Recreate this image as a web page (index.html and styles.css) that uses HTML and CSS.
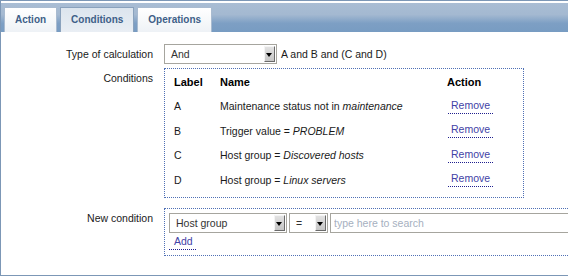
FILE: index.html
```html
<!DOCTYPE html>
<html lang="en">
<head>
  <meta charset="utf-8">
  <title>Action conditions</title>
  <link rel="stylesheet" href="styles.css">
</head>
<body>
  <div class="page">
    <!-- Tabs -->
    <div class="tabs">
      <a class="tab" href="#">Action</a>
      <a class="tab selected" href="#">Conditions</a>
      <a class="tab" href="#">Operations</a>
    </div>

    <!-- Form -->
    <div class="form">
      <div class="form-row">
        <div class="form-label">Type of calculation</div>
        <div class="form-field inline">
          <div class="select calc"><span>And</span><i class="arrow"></i></div>
          <span class="formula">A and B and (C and D)</span>
        </div>
      </div>

      <div class="form-row conditions-row">
        <div class="form-label">Conditions</div>
        <div class="form-field">
          <div class="box cond-box">
            <table class="cond-table">
              <tr class="head">
                <th class="col-label">Label</th>
                <th class="col-name">Name</th>
                <th>Action</th>
              </tr>
              <tr>
                <td>A</td>
                <td>Maintenance status not in <em>maintenance</em></td>
                <td><a class="link remove" href="#">Remove</a></td>
              </tr>
              <tr>
                <td>B</td>
                <td>Trigger value = <em>PROBLEM</em></td>
                <td><a class="link remove" href="#">Remove</a></td>
              </tr>
              <tr>
                <td>C</td>
                <td>Host group = <em>Discovered hosts</em></td>
                <td><a class="link remove" href="#">Remove</a></td>
              </tr>
              <tr>
                <td>D</td>
                <td>Host group = <em>Linux servers</em></td>
                <td><a class="link remove" href="#">Remove</a></td>
              </tr>
            </table>
          </div>
        </div>
      </div>

      <div class="form-row new-row">
        <div class="form-label">New condition</div>
        <div class="form-field">
          <div class="box new-box">
            <div class="new-controls">
              <div class="select host"><span>Host group</span><i class="arrow"></i></div>
              <div class="select operator"><span>=</span><i class="arrow"></i></div>
              <input class="search" type="text" placeholder="type here to search">
            </div>
            <a class="link add" href="#">Add</a>
          </div>
        </div>
      </div>
    </div>
  </div>
</body>
</html>
```
FILE: styles.css
```css
/* Reset */
* {
  box-sizing: border-box;
}

html, body {
  margin: 0;
  overflow: hidden;
}

body {
  background: #fff;
  font-family: "Liberation Sans", Arial, sans-serif;
  font-size: 10.5px;
  color: #1a1a1a;
}

.page {
  width: 100%;
  overflow: hidden;
  border: 1px solid #7c97b6;
  border-right: none;
}

/* Tab bar */
.tabs {
  display: flex;
  align-items: flex-end;
  height: 29px;
  margin-top: 2px;
  padding: 4px 0 0 3px;
  background: linear-gradient(#a9bdd4 0%, #a4b9d1 40%, #7d9fc4 70%, #789cc2 100%);
}

.tab {
  height: 25px;
  line-height: 24px;
  margin-right: 3px;
  padding: 0 10px;
  border: 1px solid #a9bbd0;
  border-bottom: none;
  background: linear-gradient(#ffffff, #eef2f6);
  color: #3e5f88;
  font-size: 10px;
  font-weight: bold;
  text-decoration: none;
}

.tab.selected {
  border-color: #8aa2bd;
  background: linear-gradient(#dce5ee, #e9eef4);
}

/* Form layout */
.form {
  padding: 12px 0 19px 0;
}

.form-row {
  display: flex;
  gap: 11px;
}

.conditions-row {
  margin-top: 4px;
}

.new-row {
  margin-top: 10px;
}

.form-label {
  width: 152px;
  flex-shrink: 0;
  text-align: right;
  padding-top: 4px;
  line-height: 13px;
}

.form-field.inline {
  display: flex;
  align-items: center;
  gap: 4px;
}

/* Select boxes */
.select {
  display: flex;
  height: 20px;
  padding: 1px;
  border: 1px solid #a6a59e;
  background: #fff;
  color: #333;
}

.select span {
  flex: 1;
  padding-left: 5px;
  line-height: 16px;
}

.select .arrow {
  position: relative;
  width: 11px;
  border-top: 1px solid #f4f4f4;
  border-left: 1px solid #f4f4f4;
  border-right: 1px solid #6a6a6a;
  border-bottom: 1px solid #6a6a6a;
  background: linear-gradient(#e2e2e2, #c6c6c6);
}

.select .arrow::after {
  content: "";
  position: absolute;
  left: 1px;
  top: 6px;
  border-left: 3px solid transparent;
  border-right: 3px solid transparent;
  border-top: 4px solid #000;
}

.select.calc {
  width: 113px;
}

.select.host {
  width: 118px;
}

.select.operator {
  width: 39px;
}

/* Dotted boxes */
.box {
  border: 1px dotted #4f70b5;
}

.cond-box {
  width: 360px;
  padding: 1px 0 5px 9px;
}

.cond-table {
  border-collapse: collapse;
}

.cond-table th,
.cond-table td {
  height: 24.5px;
  padding: 0;
  text-align: left;
  vertical-align: middle;
}

.cond-table .head th {
  height: 24px;
  font-size: 11px;
  font-weight: bold;
  color: #000;
}

.col-label {
  width: 46px;
}

.col-name {
  width: 227px;
}

/* Links */
.link {
  display: inline-block;
  line-height: 13px;
  padding-bottom: 1px;
  border-bottom: 1px dotted #1f1f8f;
  color: #4242a6;
  text-decoration: none;
}

.remove {
  margin-left: 1px;
  padding: 0 3px 1px 3px;
}

/* New condition */
.new-box {
  width: 460px;
  padding: 4px 0 5px 4px;
}

.new-controls {
  display: flex;
  gap: 2px;
}

.search {
  width: 280px;
  height: 20px;
  margin: 0;
  padding: 0 3px;
  border: 1px solid #a6a59e;
  font-family: inherit;
  font-size: 10.5px;
  outline: none;
}

.search::placeholder {
  color: #a6b0c0;
}

.add {
  margin-top: 2px;
  padding: 0 3px 1px 5px;
}
```
